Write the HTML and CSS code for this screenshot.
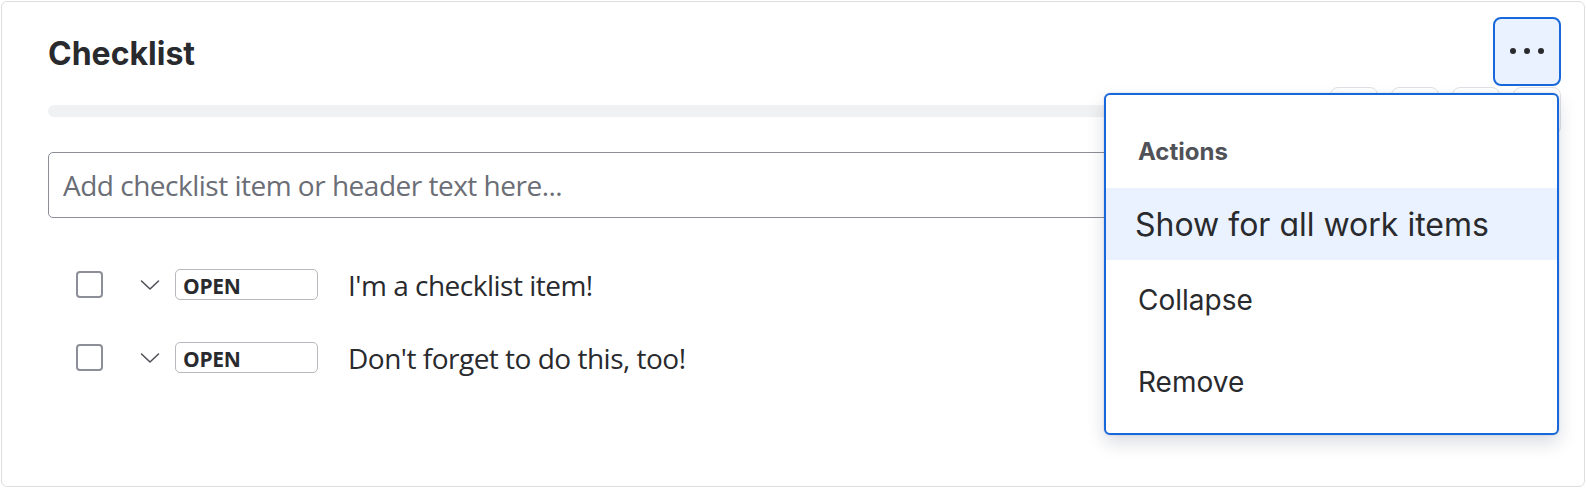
FILE: index.html
```html
<!DOCTYPE html>
<html lang="en">
<head>
<meta charset="utf-8">
<title>Checklist</title>
<link rel="stylesheet" href="styles.css">
</head>
<body>
<section class="card">
  <header class="head">
    <h2 class="title">Checklist</h2>
    <button class="more" aria-label="More actions">
      <span class="dot"></span><span class="dot"></span><span class="dot"></span>
    </button>
  </header>
  <div class="progress-row">
    <div class="bar"></div>
    <div class="tools">
      <span class="tool"></span><span class="tool"></span><span class="tool"></span><span class="tool"></span>
    </div>
  </div>
  <div class="add">
    <input class="add-input" type="text" placeholder="Add checklist item or header text here...">
  </div>
  <ul class="items">
    <li class="item">
      <span class="cb"></span>
      <svg class="chev" viewBox="0 0 20 12" width="20" height="12"><path d="M1.5 2 L10 10 L18.5 2" fill="none" stroke="#505258" stroke-width="1.6" stroke-linecap="round" stroke-linejoin="round"/></svg>
      <span class="badge">OPEN</span>
      <span class="txt">I'm a checklist item!</span>
    </li>
    <li class="item">
      <span class="cb"></span>
      <svg class="chev" viewBox="0 0 20 12" width="20" height="12"><path d="M1.5 2 L10 10 L18.5 2" fill="none" stroke="#505258" stroke-width="1.6" stroke-linecap="round" stroke-linejoin="round"/></svg>
      <span class="badge">OPEN</span>
      <span class="txt">Don't forget to do this, too!</span>
    </li>
  </ul>
  <div class="menu" role="menu">
    <div class="menu-head">Actions</div>
    <div class="menu-item menu-item-active" role="menuitem">Show for all work items</div>
    <div class="menu-item" role="menuitem">Collapse</div>
    <div class="menu-item menu-item-last" role="menuitem">Remove</div>
  </div>
</section>
</body>
</html>
```
FILE: styles.css
```css
* { box-sizing: border-box; }
html, body { margin: 0; padding: 0; background: #ffffff; }
body { padding: 1px; font-family: Inter, "Liberation Sans", sans-serif; color: #292a2e; }

.card {
  position: relative;
  width: 1584px;
  height: 486px;
  border: 1px solid #dcdee2;
  border-radius: 6px;
  padding: 14px 23px 0 46px;
  background: #fff;
}

.head {
  display: flex;
  align-items: center;
  justify-content: space-between;
  height: 70px;
}
.title {
  margin: 0;
  font-size: 32px;
  font-weight: 700;
  color: #292a2e;
  padding-top: 4px;
}
.more {
  width: 68px;
  height: 69px;
  border: 2px solid #1868db;
  border-radius: 8px;
  background: #e9f2fe;
  display: flex;
  align-items: center;
  justify-content: center;
  gap: 8px;
  padding: 0;
}
.dot { width: 6px; height: 6px; border-radius: 50%; background: #292a2e; }

.progress-row {
  display: flex;
  align-items: center;
  height: 48px;
  padding-top: 2px;
}
.bar {
  flex: 1;
  height: 12px;
  border-radius: 6px;
  background: #f0f1f2;
  margin-right: 14px;
}
.tools { display: flex; gap: 13px; }
.tool {
  width: 48px;
  height: 48px;
  border: 1px solid #dfe1e6;
  border-radius: 8px;
  background: #fff;
}

.add { margin-top: 18px; padding-right: 24px; }
.add-input {
  display: block;
  width: 100%;
  height: 66px;
  border: 1px solid #8c8f97;
  border-radius: 5px;
  padding: 0 14px;
  font-family: "Open Sans", "Noto Sans", sans-serif;
  font-size: 28px;
  letter-spacing: -0.5px;
  color: #292a2e;
  background: #fff;
}
.add-input::placeholder { color: #6b6e76; }

.items { list-style: none; margin: 30px 0 0; padding: 0 0 0 28px; }
.item {
  display: flex;
  align-items: center;
  height: 73px;
}
.cb {
  width: 27px;
  height: 27px;
  border: 2px solid #8c8f97;
  border-radius: 4px;
  flex: none;
}
.chev { margin-left: 37px; flex: none; }
.badge {
  margin-left: 15px;
  width: 143px;
  height: 31px;
  border: 1px solid #b7b9be;
  border-radius: 5px;
  padding: 2px 0 0 7px;
  display: flex;
  align-items: center;
  font-family: "Open Sans", "Noto Sans", sans-serif;
  font-weight: 700;
  font-size: 21px;
  letter-spacing: -0.3px;
  color: #292a2e;
}
.txt {
  margin-left: 30px;
  font-family: "Open Sans", "Noto Sans", sans-serif;
  font-size: 28px;
  letter-spacing: -0.5px;
  color: #292a2e;
}

.menu {
  position: absolute;
  left: 1102px;
  top: 91px;
  width: 455px;
  height: 342px;
  border: 2px solid #1868db;
  border-radius: 6px;
  background: #fff;
  box-shadow: 0 8px 18px rgba(9, 30, 66, 0.15), 0 0 2px rgba(9, 30, 66, 0.2);
  display: flex;
  flex-direction: column;
}
.menu-head {
  height: 93px;
  padding: 42px 0 0 32px;
  font-size: 24px;
  font-weight: 700;
  color: #505258;
}
.menu-item {
  height: 80px;
  display: flex;
  align-items: center;
  padding-left: 32px;
  font-size: 28px;
  color: #292a2e;
}
.menu-item-last { padding-top: 4px; }
.menu-item-active {
  height: 72px;
  background: #e9f2fe;
  padding-left: 29px;
  font-size: 32px;
  font-feature-settings: "cv11" 1;
}
```
